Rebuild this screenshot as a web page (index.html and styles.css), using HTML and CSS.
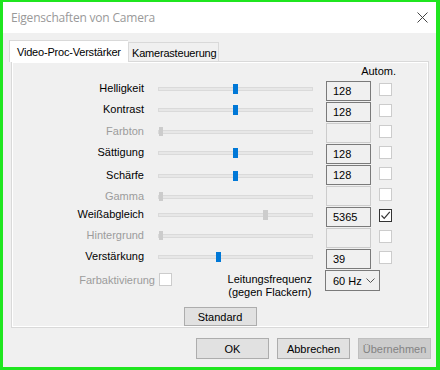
FILE: index.html
```html
<!DOCTYPE html>
<html lang="de">
<head>
<meta charset="utf-8">
<title>Eigenschaften von Camera</title>
<link rel="stylesheet" href="styles.css">
</head>
<body>
<div class="window">
  <div class="titlebar">
    <span class="title">Eigenschaften von Camera</span>
    <svg class="close" width="11" height="11" viewBox="0 0 11 11"><path d="M0.5 0.5 L10.5 10.5 M10.5 0.5 L0.5 10.5" stroke="#444" stroke-width="1" fill="none"/></svg>
  </div>
  <div class="content">
    <div class="tabs">
      <div class="tab active">Video-Proc-Verstärker</div>
      <div class="tab">Kamerasteuerung</div>
    </div>
    <div class="panel">
      <div class="page">
        <div class="head">Autom.</div>
        <div class="rows">
          <div class="row">
            <span class="lbl">Helligkeit</span>
            <div class="slider"><span class="thumb" style="left:75px"></span></div>
            <div class="edit">128</div>
            <span class="chk"></span>
          </div>
          <div class="row">
            <span class="lbl">Kontrast</span>
            <div class="slider"><span class="thumb" style="left:75px"></span></div>
            <div class="edit">128</div>
            <span class="chk"></span>
          </div>
          <div class="row adj1 off">
            <span class="lbl">Farbton</span>
            <div class="slider"><span class="thumb" style="left:1px"></span></div>
            <div class="edit"></div>
            <span class="chk"></span>
          </div>
          <div class="row adj1">
            <span class="lbl">Sättigung</span>
            <div class="slider"><span class="thumb" style="left:75px"></span></div>
            <div class="edit">128</div>
            <span class="chk"></span>
          </div>
          <div class="row adj3">
            <span class="lbl">Schärfe</span>
            <div class="slider"><span class="thumb" style="left:75px"></span></div>
            <div class="edit">128</div>
            <span class="chk"></span>
          </div>
          <div class="row adj3 off">
            <span class="lbl">Gamma</span>
            <div class="slider"><span class="thumb" style="left:1px"></span></div>
            <div class="edit"></div>
            <span class="chk"></span>
          </div>
          <div class="row auto">
            <span class="lbl">Weißabgleich</span>
            <div class="slider"><span class="thumb" style="left:105px"></span></div>
            <div class="edit">5365</div>
            <span class="chk checked"><svg width="11" height="11" viewBox="0 0 11 11"><path d="M1.5 5.5 L4.2 8.3 L9.8 1.8" stroke="#333" stroke-width="1.2" fill="none"/></svg></span>
          </div>
          <div class="row off">
            <span class="lbl">Hintergrund</span>
            <div class="slider"><span class="thumb" style="left:1px"></span></div>
            <div class="edit"></div>
            <span class="chk"></span>
          </div>
          <div class="row">
            <span class="lbl">Verstärkung</span>
            <div class="slider"><span class="thumb" style="left:58px"></span></div>
            <div class="edit">39</div>
            <span class="chk"></span>
          </div>
        </div>
        <div class="bottom">
          <div class="farb">
            <span class="farb-lbl">Farbaktivierung</span>
            <span class="chk"></span>
          </div>
          <div class="freq">
            <div class="freq-lbl">Leitungsfrequenz<br>(gegen Flackern)</div>
          </div>
          <div class="combo">
            <span>60 Hz</span>
            <svg width="9" height="5" viewBox="0 0 9 5"><path d="M0.5 0.5 L4.5 4.5 L8.5 0.5" stroke="#555" stroke-width="1" fill="none"/></svg>
          </div>
        </div>
        <div class="std">
          <button class="btn std-btn">Standard</button>
        </div>
      </div>
    </div>
    <div class="buttons">
      <button class="btn">OK</button>
      <button class="btn">Abbrechen</button>
      <button class="btn disabled">Übernehmen</button>
    </div>
  </div>
</div>
</body>
</html>
```

FILE: styles.css
```css
html, body {
  margin: 0;
  padding: 0;
}
body {
  background: #1fe61f;
  font-family: "Liberation Sans", Arial, sans-serif;
  font-size: 11px;
  color: #000;
  width: 440px;
  height: 370px;
  overflow: hidden;
}
.window {
  margin: 2px 0 0 3px;
  width: 433px;
  height: 365px;
  background: #f0f0f0;
  display: flex;
  flex-direction: column;
}
.titlebar {
  height: 31px;
  flex: none;
  background: #fff;
  display: flex;
  align-items: center;
  justify-content: space-between;
  padding: 0 8px 0 8px;
}
.title {
  font-family: "Open Sans", "Noto Sans", sans-serif;
  font-size: 12px;
  color: #999;
  letter-spacing: -0.2px;
}
.close {
  display: block;
}
.content {
  padding: 7px 0 0 8px;
}
.tabs {
  display: flex;
  align-items: flex-end;
  height: 21px;
  margin-left: -2px;
  position: relative;
  z-index: 2;
}
.tab {
  box-sizing: border-box;
  height: 19px;
  border: 1px solid #d9d9d9;
  border-bottom: none;
  background: #f0f0f0;
  padding: 2px 0 0 3px;
  width: 91px;
  line-height: 16px;
  letter-spacing: -0.2px;
  white-space: nowrap;
}
.tab.active {
  height: 22px;
  width: 119px;
  margin-bottom: -1px;
  background: #fff;
  padding: 3px 0 0 7px;
  border-right: none;
}
.panel {
  box-sizing: border-box;
  width: 418px;
  height: 267px;
  border: 1px solid #d9d9d9;
  background: #fff;
  padding: 1px;
  position: relative;
  z-index: 1;
}
.page {
  background: #f0f0f0;
  height: 100%;
}
.head {
  height: 17px;
  line-height: 17px;
  text-align: right;
  padding-right: 31px;
}
.row {
  display: flex;
  align-items: flex-start;
  height: 21px;
}
.lbl {
  width: 131px;
  text-align: right;
  line-height: 16px;
  white-space: nowrap;
}
.slider {
  margin-left: 14px;
  width: 155px;
  height: 16px;
  position: relative;
}
.slider::before {
  content: "";
  position: absolute;
  left: 0;
  right: 0;
  top: 7px;
  height: 4px;
  box-sizing: border-box;
  border: 1px solid #dadada;
  background: #e7e7e7;
}
.thumb {
  position: absolute;
  top: 4px;
  width: 5px;
  height: 10px;
  background: #0078d7;
}
.row.adj1 .lbl, .row.adj1 .slider {
  margin-top: 1px;
}
.row.adj3 .lbl, .row.adj3 .slider {
  margin-top: 3px;
}
.row.off .lbl {
  color: #9c9c9c;
}
.row.off .thumb {
  background: #cccccc;
  width: 4px;
  height: 9px;
}
.row.auto .thumb {
  background: #cccccc;
}
.edit {
  margin-left: 13px;
  width: 45px;
  height: 20px;
  margin-top: 1px;
  box-sizing: border-box;
  border: 1px solid #7a7a7a;
  padding-left: 6px;
  line-height: 18px;
  background: #f0f0f0;
  font-size: 11px;
}
.row.off .edit {
  border-color: #cccccc;
}
.chk {
  display: block;
  margin-left: 8px;
  width: 13px;
  height: 13px;
  margin-top: 3px;
  box-sizing: border-box;
  border: 1px solid #cccccc;
  background: #fff;
}
.chk.checked {
  border-color: #333;
}
.chk svg {
  display: block;
  margin: 0;
}
.bottom {
  display: flex;
  align-items: flex-start;
  height: 23px;
}
.farb {
  width: 159px;
  display: flex;
  justify-content: flex-end;
  align-items: flex-start;
}
.farb-lbl {
  color: #9c9c9c;
  line-height: 16px;
  margin-top: 3px;
}
.farb .chk {
  margin-left: 4px;
  margin-top: 4px;
}
.freq {
  width: 153px;
  display: flex;
  justify-content: flex-end;
}
.freq-lbl {
  margin-right: 13px;
  margin-top: 4px;
  line-height: 13px;
  text-align: center;
}
.combo {
  box-sizing: border-box;
  width: 55px;
  height: 21px;
  margin-top: 1px;
  border: 1px solid #7a7a7a;
  background: #f0f0f0;
  display: flex;
  align-items: center;
  justify-content: space-between;
  padding: 0 4px 0 7px;
}
.std {
  display: flex;
  justify-content: center;
  margin-top: 15px;
}
.btn {
  box-sizing: border-box;
  width: 73px;
  height: 21px;
  border: 1px solid #adadad;
  background: #e1e1e1;
  font-family: "Liberation Sans", Arial, sans-serif;
  font-size: 11px;
  color: #000;
  padding: 0;
  margin: 0;
}
.std-btn {
  height: 19px;
}
.btn.disabled {
  background: #cccccc;
  border-color: #bfbfbf;
  color: #838383;
}
.buttons {
  display: flex;
  justify-content: flex-end;
  gap: 8px;
  margin-top: 10px;
  padding-right: 5px;
}
```
